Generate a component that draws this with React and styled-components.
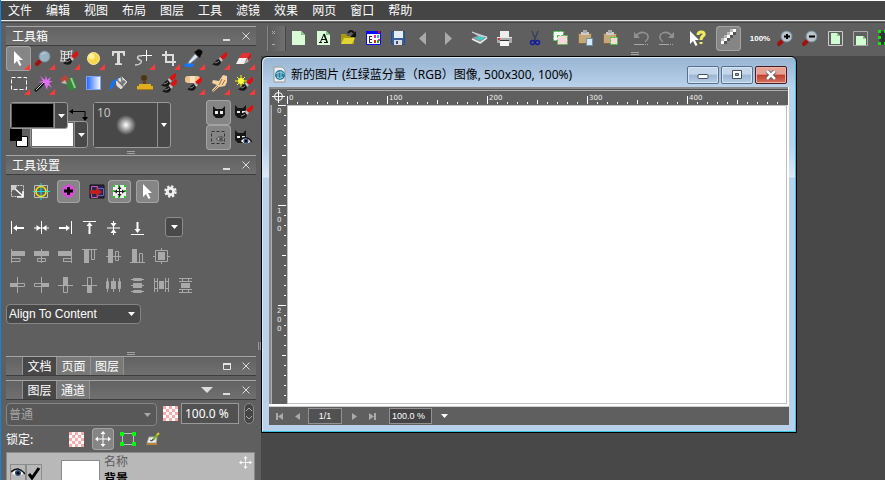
import React from "react";
import styled, { createGlobalStyle, css } from "styled-components";

const cjk = '"Noto Sans CJK SC", sans-serif';
const mixed = '"Noto Sans", "Noto Sans CJK SC", sans-serif';
const gray = "#5f5f5f";

const GlobalStyle = createGlobalStyle`
  * { box-sizing: border-box; }
  html, body, #root { margin: 0; height: 100%; }
  body { background: #484848; overflow: hidden; font: 12px/16px ${cjk}; color: #fff; }
  button, input, select { font: inherit; color: inherit; margin: 0; padding: 0; }
  button { border: 0; background: none; }
  svg { display: block; flex: none; }
`;

const Shell = styled.div`
  display: flex;
  flex-direction: column;
  height: 100vh;
  border-left: 1px solid #1583d8;
`;

const MenuBar = styled.nav`
  display: flex;
  gap: 14px;
  height: 21px;
  padding-left: 7px;
  background: #454545;
  border-top: 1px solid #fff;
  border-bottom: 1px solid #e6e6e6;
`;

const MenuItem = styled.button`
  height: 18px;
  line-height: 18px;
  white-space: nowrap;
`;

const Main = styled.div`
  display: flex;
  flex: 1;
  min-height: 0;
  border-top: 1px solid #6e6e6e;
`;

const Dock = styled.aside`
  display: flex;
  flex-direction: column;
  flex: 0 0 260px;
  padding: 3px 5px 0;
  background: ${gray};
  border-top: 1px solid #444;
  overflow: hidden;
`;

const DockEdge = styled.div`
  position: absolute;
  left: 258px;
  top: 342px;
  width: 3px;
  height: 8px;
  border: solid #999;
  border-width: 0 1px;
`;

const PanelHeader = styled.header`
  display: flex;
  align-items: center;
  flex: none;
  height: 20px;
  padding-right: 5px;
  border-top: 1px solid #a6a6a6;
  border-bottom: 1px solid #3d3d3d;
  background: linear-gradient(#626262, #707070);
`;

const PanelTitle = styled.h2`
  flex: 1;
  margin: 0;
  padding-left: 6px;
  font-size: 12px;
  font-weight: 400;
  line-height: 18px;
`;

const HeaderButton = styled.button`
  display: flex;
  width: 10px;
  height: 16px;
  margin-left: 9px;
  align-items: center;
  justify-content: center;
`;

const TabList = styled.div`
  display: flex;
  flex: 1;
  padding-left: 16px;
`;

const Tab = styled.button`
  width: 34px;
  height: 18px;
  line-height: 18px;
  border-left: 1px solid #919191;
  background: ${(p) => (p.$active ? "#484848" : "#797979")};
  &:last-child { border-right: 1px solid #919191; }
`;

const Grip = styled.div`
  flex: none;
  align-self: ${(p) => (p.$left ? "flex-start" : "center")};
  width: 8px;
  height: 3px;
  margin: 1px 0 1px ${(p) => p.$left || 0}px;
  border: solid #a2a2a2;
  border-width: 1px 0;
`;

const selected = css`
  background: #858585;
  box-shadow: inset 0 0 0 1px #a3a3a3;
  border-radius: 4px;
`;

const ToolGrid = styled.div`
  display: grid;
  grid-template-columns: repeat(10, 25px);
  grid-auto-rows: 25px;
  flex: none;
`;

const ToolButton = styled.button`
  display: flex;
  flex: none;
  width: 25px;
  height: 25px;
  ${(p) => p.$on && selected}
`;

const ColorRow = styled.div`
  display: flex;
  align-items: center;
  flex: none;
  gap: 5px;
  margin-top: 4px;
  padding-left: 4px;
`;

const ColorWells = styled.div`
  display: grid;
  width: 78px;
  height: 46px;
  > * { grid-area: 1 / 1; }
`;

const Well = styled.button`
  display: flex;
  width: 58px;
  height: 27px;
  place-self: ${(p) => (p.$back ? "end" : "start")};
  border: 1px solid #9a9a9a;
  border-radius: 3px;
  background: #484848;
  z-index: ${(p) => (p.$back ? 0 : 1)};
`;

const WellColor = styled.span`
  flex: 1;
  align-self: stretch;
  border: 1px solid #666;
  background: ${(p) => p.$color};
`;

const WellArrow = styled.span`
  display: flex;
  width: 13px;
  align-self: stretch;
  align-items: center;
  justify-content: center;
  border-left: 1px solid #909090;
`;

const SwapButton = styled.button`
  place-self: start end;
  margin-top: 6px;
`;

const ResetButton = styled.button`
  place-self: end start;
`;

const BrushPicker = styled.button`
  display: flex;
  width: 78px;
  height: 46px;
  border: 1px solid #9a9a9a;
  border-radius: 3px;
  background: #484848;
  text-align: left;
`;

const BrushPreview = styled.span`
  flex: 1;
  align-self: stretch;
  padding: 2px 3px;
  color: #c4c4c4;
  font: 12px/16px ${mixed};
  background: radial-gradient(circle at 32px 22px, #fff 0, #b5b5b5 4px, #484848 10px);
`;

const MaskGrid = styled.div`
  display: grid;
  grid-template-columns: 25px 25px;
  margin-left: auto;
`;

const SettingsRow = styled.div`
  display: flex;
  flex: none;
  gap: 5px;
  margin-top: 5px;
`;

const ButtonGroup = styled.div`
  display: flex;
`;

const SettingButton = styled.button`
  display: flex;
  width: 23px;
  height: 23px;
  ${(p) => p.$on && selected}
`;

const AlignRows = styled.div`
  display: flex;
  flex-direction: column;
  flex: none;
  gap: 9px;
  margin-top: 14px;
`;

const AlignRow = styled.div`
  display: flex;
  gap: 1px;
`;

const AlignButton = styled.button`
  display: flex;
  width: 23px;
  height: 20px;
  color: ${(p) => (p.disabled ? "#a9a9a9" : "#fff")};
`;

const DropButton = styled.button`
  display: flex;
  align-items: center;
  justify-content: center;
  width: 18px;
  height: 20px;
  margin-left: 15px;
  border: 1px solid #8c8c8c;
  border-radius: 3px;
  background: #494949;
`;

const SelectBox = styled.div`
  display: grid;
  align-items: center;
  flex: none;
  width: ${(p) => p.$width}px;
  > * { grid-area: 1 / 1; }
  > svg { justify-self: end; margin-right: 6px; pointer-events: none; }
`;

const Select = styled.select`
  appearance: none;
  width: 100%;
  height: ${(p) => p.$height}px;
  padding: 0 2px;
  border: 1px solid #858585;
  border-radius: 4px;
  background: ${(p) => (p.disabled ? "#585858" : "#484848")};
  color: ${(p) => (p.disabled ? "#a5a5a5" : "#fff")};
  opacity: 1;
  font-family: "Liberation Sans", ${cjk};
`;

const DockStack = styled.div`
  display: flex;
  flex-direction: column;
  flex: none;
  gap: 4px;
`;

const Spacer = styled.div`
  height: 27px;
  flex: none;
`;

const OpacityRow = styled.div`
  display: flex;
  align-items: flex-start;
  flex: none;
  margin-top: 3px;
  > svg { margin: 3px 3px 0 6px; }
`;

const NumberInput = styled.input`
  width: 58px;
  height: 21px;
  padding: 0 3px;
  border: 1px solid #999;
  background: #515151;
  font: 12px/16px ${mixed};
`;

const Spinner = styled.button`
  width: 10px;
  height: 21px;
  margin-left: 5px;
  border-radius: 5px;
  border: 1px solid #8a8a8a;
  background: #454545;
`;

const LockRow = styled.div`
  display: flex;
  align-items: center;
  flex: none;
  height: 22px;
  margin-top: 2px;
`;

const LockLabel = styled.span`
  width: 58px;
`;

const LockButton = styled.button`
  display: flex;
  align-items: center;
  justify-content: center;
  width: 24px;
  height: 22px;
`;

const LockSelected = styled(LockButton)`
  width: 22px;
  margin: 0 2px 0 4px;
  ${selected}
`;

const LayerList = styled.ul`
  display: flex;
  flex: none;
  align-items: flex-start;
  height: 56px;
  margin: 2px 1px 0 0;
  padding: 0 2px 0 3px;
  list-style: none;
  border: 1px solid #8a8a8a;
  background: #b8b8b8;
`;

const LayerRow = styled.li`
  display: flex;
  flex: 1;
`;

const LayerFlags = styled.div`
  display: flex;
  margin-top: 11px;
  width: 51px;
`;

const LayerFlag = styled.button`
  display: flex;
  align-items: center;
  justify-content: center;
  width: 16px;
  height: 17px;
  border: 1px solid #8b8b8b;
`;

const Thumb = styled.div`
  width: 39px;
  height: 44px;
  margin-top: 7px;
  background: #fff;
  border: 1px solid #8a8a8a;
`;

const LayerText = styled.div`
  flex: 1;
  padding-left: 4px;
  color: #5c5c5c;
`;

const LayerName = styled.strong`
  display: block;
  margin-top: 1px;
  color: #000;
`;

const LayerMove = styled.button`
  margin-top: 2px;
  height: 15px;
`;

const Work = styled.main`
  display: flex;
  flex-direction: column;
  flex: 1;
  min-width: 0;
`;

const ToolBar = styled.div`
  display: flex;
  flex-direction: column;
  height: 34px;
  flex: none;
  padding: 3px 0 0 6px;
  background: ${gray};
  border-top: 1px solid #444;
  overflow: hidden;
`;

const ToolBarRow = styled.div`
  display: flex;
  width: 100%;
  overflow: hidden;
`;

const ToolBarHandle = styled.div`
  flex: none;
  width: 19px;
  height: 25px;
  border-left: 1px solid #858585;
  border-right: 1px solid #454545;
  background: linear-gradient(90deg, #5c5c5c, #707070);
`;

const BarGroup = styled.div`
  display: flex;
  flex: none;
  & + & { margin-left: 6px; }
`;

const ZoomText = styled.button`
  width: 26px;
  height: 25px;
  font: bold 8px/24px "Liberation Sans", sans-serif;
`;

const Desktop = styled.div`
  position: relative;
  flex: 1;
  background: #484848;
`;

const DocWindow = styled.section`
  position: absolute;
  left: 0;
  top: 0;
  width: 536px;
  padding: 0 7px 7px;
  border: 1px solid #000;
  border-radius: 6px 6px 0 0;
  background: linear-gradient(#98b4d2 0, #b9d1ea 30px, #bad2ec 90px, #dce9f7 120px, #b9d1ea 121px);
  box-shadow: inset -1px -1px 0 #35c5e0, inset 1px 1px 0 #d9e9f7;
`;

const TitleBar = styled.header`
  display: flex;
  align-items: center;
  height: 30px;
  padding: 5px 2px 0 4px;
  color: #000;
`;

const DocTitle = styled.h1`
  flex: 1;
  margin: 0 0 0 5px;
  font: 12px/20px ${mixed};
  white-space: nowrap;
`;

const WinButton = styled.button`
  display: flex;
  align-items: center;
  justify-content: center;
  width: 32px;
  height: 18px;
  margin-left: 2px;
  border: 1px solid ${(p) => (p.$close ? "#4a1a22" : "#56708e")};
  border-radius: 2px;
  background: ${(p) =>
    p.$close
      ? "linear-gradient(#e5a295 0 45%, #c23f29 50%, #d3715f)"
      : "linear-gradient(#c3d6ea 0 45%, #9bb6d3 50%, #b6cee7)"};
  box-shadow: inset 0 0 0 1px ${(p) => (p.$close ? "#e9b3a8" : "#d6e4f3")};
`;

const DocFrame = styled.div`
  display: grid;
  grid-template-columns: 18px 1fr;
  grid-template-rows: 18px 299px;
  padding: 0 1px 2px 0;
  background: #fff;
  border-bottom: 1px solid #d0d0d0;
`;

const RulerCorner = styled.div`
  background: ${gray};
  border-top: 2px solid #8b8b8b;
  border-left: 1px solid #8b8b8b;
`;

const RulerTop = styled.div`
  background: ${gray};
  border-top: 2px solid #8b8b8b;
  box-shadow: inset 0 1px #505050, inset 0 2px #adadad;
  overflow: hidden;
`;

const RulerLeft = styled.div`
  background: ${gray};
  border-left: 2px solid #8b8b8b;
  box-shadow: inset 1px 0 #adadad;
  overflow: hidden;
`;

const Canvas = styled.div`
  background: #fff;
  border: 1px solid #c0c0c0;
  margin-right: 1px;
`;

const StatusBar = styled.footer`
  display: flex;
  align-items: center;
  height: 18px;
  padding-left: 2px;
  background: ${gray};
  font: 9px/14px "Liberation Sans", sans-serif;
`;

const StatusButton = styled.button`
  display: flex;
  align-items: center;
  justify-content: center;
  width: 18px;
  height: 16px;
`;

const StatusInput = styled.input`
  width: ${(p) => p.$width}px;
  height: 16px;
  margin: 0 3px 0 ${(p) => (p.$wide ? 8 : 1)}px;
  padding: 0 ${(p) => (p.$wide ? 2 : 0)}px;
  border: 1px solid #929292;
  background: ${(p) => (p.$wide ? "#444" : "#515151")};
  text-align: ${(p) => (p.$wide ? "left" : "center")};
`;

/* ---------- drawings ---------- */

const Svg = ({ w = 25, h = w, children, ...rest }) => (
  <svg width={w} height={h} viewBox={`0 0 ${w} ${h}`} fill="none" aria-hidden="true" {...rest}>
    {children}
  </svg>
);

const Down = ({ color = "#fff", w = 7 }) => (
  <Svg w={w} h={4}>
    <path d={`M0 0H${w}L${w / 2} 4Z`} fill={color} />
  </Svg>
);

const Corner = () => <path d="M24 18v6h-6Z" fill="#ff3838" />;

const Brush = ({ x = 0, y = 0 }) => (
  <g transform={`translate(${x} ${y})`}>
    <path d="M20 6l1 1v3l-4 4-3-3Z" fill="#e01010" />
    <path d="M14 11l3 3-2 2-3-2Z" fill="#bdbdbd" />
    <path d="M13 13l2 3c-1 5-6 4-9 2 3 0 3-4 7-5Z" fill="#151515" />
    <path d="M9 17q2 0 4-2" stroke="#888" />
  </g>
);

const Lens = ({ sign, light }) => (
  <>
    <path d="M9 15l-3 3" stroke="#a31010" strokeWidth="4" strokeLinecap="round" />
    <circle cx="13.500" cy="10.500" r="5.500" fill={light || "#9bb2c0"} stroke="#6f8c9e" />
    {!sign && <path d="M10 9q2-3 5-2" stroke="#c5d5dd" />}
    {sign}
  </>
);

const Pointer = () => <path d="M8 5v13l3-3 2.500 5 2-1-2.500-5h4Z" fill="#fff" />;

const TOOLS = [
  ["选择", <><Pointer /><Corner /></>],
  ["缩放", <><Lens /><Corner /></>],
  ["网格变形", <><path d="M5 5q5 2 11 0M5 8q5 1 10 0M5 12q5 1 9 0M4 15h7M5 4q1 5 0 11M8.500 5v10M12.500 5v8M16 4q-1 4 0 6" stroke="#ddd" /><Brush x={1} y={-1} /><Corner /></>],
  ["椭圆", <><circle cx="12.500" cy="12.500" r="6" fill="#f9d54c" stroke="#f7efaa" /><circle cx="10.500" cy="10.500" r="3" fill="#fff09a" /><Corner /></>],
  ["文字", <path d="M6 5h13v5h-1.500l-1-3H14v10l2 .5V19H9v-1.500l2-.5V7H8.500l-1 3H6Z" fill="#dcdcdc" />],
  ["路径", <><path d="M15.500 4v11M10 9.500h11" stroke="#fff" /><path d="M11 10c-6-1-5 3-2 4s1 5-5 5" stroke="#ccc" strokeWidth="1.500" /><Corner /></>],
  ["裁剪", <><path d="M10 5v11h10M6 9h11v11" stroke="#ddd" strokeWidth="2" /><Corner /></>],
  ["吸管", <><ellipse cx="8" cy="19" rx="5" ry="2" fill="#1574ff" /><path d="M14 8l3 3-7 6-3 1 1-3Z" fill="#dce7ef" stroke="#70889a" /><path d="M13 6l6 6 1-3q3-3 0-5t-5 1Z" fill="#080808" /><Corner /></>],
  ["画笔", <><Brush /><Corner /></>],
  ["橡皮", <><path d="M11 7h9l-3 5H8Z" fill="#e23333" /><path d="M8 12h8l-3 6H5Z" fill="#f2f2f2" /><path d="M17 12l3-4v4l-3 4-4 2Z" fill="#c9a9a9" /><path d="M17 11l3-4v5l-3 3Z" fill="#bb2020" /><Corner /></>],
  ["选框", <><path d="M5.500 6.500h15v12h-15z" stroke="#fff" strokeDasharray="4 2" /><Corner /></>],
  ["魔棒", <><path d="M15 4l1 5 4-3-2 4h4l-4 2 3 5-4-3-1 5-2-5-4 2 2-4-5-1 5-1-3-5 5 4Z" fill="#e46bf5" /><path d="M13 12l-9 8" stroke="#111" strokeWidth="3" /><path d="M13 11l-8 8" stroke="#ccc" /><Corner /></>],
  ["油漆", <><path d="M9 8l8-2 4 11-7 3-5-8Z" fill="#37843b" /><path d="M15 7l4 10" stroke="#8bd18a" strokeWidth="2" /><path d="M4 8l6-4 3 4-3 5-5-3Z" fill="#b6453e" /><path d="M5 12l4-3 2 4" fill="#bbb" /></>],
  ["渐变", <><defs><linearGradient id="blueRamp"><stop stopColor="#1d62ff" /><stop offset="1" stopColor="#fff" /></linearGradient></defs><path d="M5.500 5.500h14v13h-14z" fill="url(#blueRamp)" stroke="#7ba5ff" /></>],
  ["填充", <><path d="M9 9l7-4 6 6-7 8-5-4Z" fill="#ddd" stroke="#555" /><path d="M11 9l7 7M15 5l1 5" stroke="#777" strokeWidth="1.500" /><path d="M14 11l4-2 2 2-4 4Z" fill="#777" /><path d="M4 19q-1-11 9-11l-4 3q-1 6-5 8Z" fill="#1273ff" /></>],
  ["图章", <><circle cx="13" cy="7" r="3" fill="#4f3512" /><path d="M12 9h3v6h-3Z" fill="#68400d" /><path d="M8 13h12v2H8z" fill="#e1ae1e" /><path d="M6 15h16v3H6Z" fill="#e1ae1e" /><path d="M6 18h16v1H6z" fill="#a87b17" /></>],
  ["克隆画笔", <><g transform="translate(-1 -4)"><Brush /></g><Brush y={2} /></>],
  ["修复", <><rect x="4" y="5" width="15" height="7" rx="3" fill="#edc38d" /><path d="M9 5h5v7H9Z" fill="#fae0bb" /><Brush /><Corner /></>],
  ["涂抹", <><path d="M17 4l4 1v6l-2 4-6 1-6 5-1-2 5-5-5-2 1-3 6 1Z" fill="#f6d2a4" /><path d="M16 8l-3 6M19 9l-3 5M12 15l-5 5" stroke="#a96d32" /><Corner /></>],
  ["减淡", <><path d="M10 4v12M4 10h12M6 6l8 8M6 14l8-8" stroke="#ff0" /><circle cx="10" cy="10" r="3" fill="#ffff38" /><Brush x={1} /><Corner /></>],
];

const Cat = ({ extra }) => (
  <Svg><path d={extra ? "M4 5l3 3h5l3-3v9l-3 4H7l-3-3Z" : "M7 6l3 3h6l3-3v9l-3 3h-6l-3-3Z"} fill="#171717" /><path d={extra ? "M6 11h3v2H6zM11 11h3v2h-3z" : "M9 11h3v3H9zM14 11h3v3h-3z"} fill="#eee" />{extra}</Svg>
);

const Eye = () => <><path d="M1 7q6-7 12 0-6 6-12 0Z" fill="#fff" /><path d="M0 6q7-7 14 2" stroke="#111" strokeWidth="1.500" /><circle cx="7" cy="7" r="3" fill="#294c79" /><circle cx="7" cy="7" r="1.500" fill="#000" /></>;

const GearIcon = () => (
  <Svg w={23}><circle cx="11.500" cy="11.500" r="3.200" stroke="#eee" strokeWidth="3" /><circle cx="11.500" cy="11.500" r="5" stroke="#eee" strokeWidth="2.500" strokeDasharray="2.200 1.730" /></Svg>
);

const SETTING_GROUPS = [
  [
    ["变换", false, <><path d="M5.500 5.500h12v11h-12z" stroke="#d5d5d5" strokeDasharray="2 1" /><path d="M8 8l9 8m0-5v6h-6" stroke="#fff" strokeWidth="1.500" /><path d="M5 5h6l-1 4-5 2Z" fill="#ccc" /></>],
    ["中心", false, <><path d="M5.500 5.500h13v12h-13z" stroke="#bdbdbd" /><path d="M12 3v17M4 11.500h17" stroke="#00e4f5" /><circle cx="12" cy="11.500" r="5" stroke="#ffe100" strokeWidth="1.500" /></>],
  ],
  [["添加", true, <><circle cx="11.500" cy="11" r="6.500" fill="#df48df" /><path d="M11.500 7v8M7 11h9" stroke="#000" strokeWidth="3" /></>]],
  [
    ["移入", false, <><path d="M5 5h14v13H5z" fill="#292945" stroke="#111" /><path d="M6.500 6.500h6v11h-6z" stroke="#c55ac5" /><path d="M12.500 8.500h6v7h-6z" stroke="#6161d4" /><path d="M5 10h6V7l6 5-6 5v-3H5z" fill="#bd2020" /></>],
    ["移动", true, <><path d="M5 5h13v13H5z" fill="#efefef" /><path d="M5 5h2v2H5zM10 5h2v2h-2zM16 5h2v2h-2zM5 10h2v2H5zM16 10h2v2h-2zM5 16h2v2H5zM10 16h2v2h-2zM16 16h2v2h-2z" fill="#08df08" /><path d="M11.500 8v8M8 11.500h8" stroke="#222" /><path d="M11.500 6l2 3h-4zM11.500 17l2-3h-4zM6 11.500l3-2v4zM17 11.500l-3-2v4z" fill="#222" /></>],
  ],
  [["指针", true, <g transform="translate(-1 -1)"><Pointer /></g>], ["设置", false, null]],
];

const ALIGN = [
  [
    ["左对齐", <><path d="M5.500 4v13" stroke="currentColor" /><path d="M7 11l4-3v2h7v2h-7v2Z" fill="currentColor" /></>],
    ["水平居中", <><path d="M11.500 4v13M4 11h15" stroke="currentColor" /><path d="M10.500 11l-4-3v6ZM12.500 11l4-3v6Z" fill="currentColor" /></>],
    ["右对齐", <><path d="M17.500 4v13" stroke="currentColor" /><path d="M16 11l-4-3v2H5v2h7v2Z" fill="currentColor" /></>],
    ["顶对齐", <><path d="M5 4.500h13" stroke="currentColor" /><path d="M11.500 5l3 4h-2v8h-2V9h-2Z" fill="currentColor" /></>],
    ["垂直居中", <><path d="M5 11h13M11.500 4v14" stroke="currentColor" /><path d="M11.500 10l-3-4h6ZM11.500 12l-3 4h6Z" fill="currentColor" /></>],
    ["底对齐", <><path d="M5 17.500h13" stroke="currentColor" /><path d="M11.500 16l3-4h-2V5h-2v7h-2Z" fill="currentColor" /></>],
  ],
  [
    ["对象左", <><path d="M5.500 3v14M6 12.500h8v3H6" stroke="currentColor" /><path d="M5 5h14v5H5z" fill="currentColor" /></>],
    ["对象中", <><path d="M11.500 3v14M7.500 12.500h8v3h-8z" stroke="currentColor" /><path d="M4 5h15v5H4z" fill="currentColor" /></>],
    ["对象右", <><path d="M17.500 3v14M9.500 15.500h8M9.500 12.500h8M9.500 12v4" stroke="currentColor" /><path d="M4 5h14v5H4z" fill="currentColor" /></>],
    ["对象顶", <><path d="M4 3.500h15M13.500 4v9.500h3V4" stroke="currentColor" /><path d="M6 3h5v14H6z" fill="currentColor" /></>],
    ["对象腰", <><path d="M4 10.500h15M13.500 5.500h3v9h-3z" stroke="currentColor" /><path d="M6 3h5v14H6z" fill="currentColor" /></>],
    ["对象底", <><path d="M4 16.500h15M13.500 16V7.500h3V16" stroke="currentColor" /><path d="M6 3h5v14H6z" fill="currentColor" /></>],
    ["对象居中", <><path d="M5.500 4.500h12v11h-12zM11.500 2v3M11.500 15v3M3 10.500h3M17 10.500h3" stroke="currentColor" /><path d="M8 6h7v8H8z" fill="currentColor" /></>],
  ],
  [
    ["贴左", <><path d="M11.500 2v16M12 8.500h6.500v3H12" stroke="currentColor" /><path d="M4 8h8v4H4z" fill="currentColor" /></>],
    ["贴右", <><path d="M11.500 2v16M11 8.500H4.500v3H11" stroke="currentColor" /><path d="M11 8h8v4h-8z" fill="currentColor" /></>],
    ["贴上", <><path d="M4 10.500h15M9.500 11v6.500h4V11" stroke="currentColor" /><path d="M9 2h5v9H9z" fill="currentColor" /></>],
    ["贴下", <><path d="M4 10.500h15M9.500 10V2.500h4V10" stroke="currentColor" /><path d="M9 10h5v8H9z" fill="currentColor" /></>],
    ["水平分布", <><path d="M5.500 3v14M11.500 3v14M17.500 3v14" stroke="currentColor" /><path d="M4.500 6.500h2v7h-2zM16.500 6.500h2v7h-2z" stroke="currentColor" /><path d="M9 6h5v8H9z" fill="currentColor" /></>],
    ["垂直分布", <><path d="M5 4.500h13M5 10.500h13M5 16.500h13M7.500 3.500h8v2h-8zM7.500 15.500h8v2h-8z" stroke="currentColor" /><path d="M7 8h9v5H7z" fill="currentColor" /></>],
    ["水平间距", <><path d="M4.500 3v14M7.500 3v14M15.500 3v14M18.500 3v14M4 6.500h4M4 13.500h4M15 6.500h4M15 13.500h4" stroke="currentColor" /><path d="M9 6h5v8H9z" fill="currentColor" /></>],
    ["垂直间距", <><path d="M5 3.500h13M5 6.500h13M5 14.500h13M5 17.500h13M8.500 4v3M14.500 4v3M8.500 14v3M14.500 14v3" stroke="currentColor" /><path d="M7 8h9v5H7z" fill="currentColor" /></>],
  ],
];

const Checker = () => (
  <Svg w={15}>
    <path d="M0 0h15v15H0z" fill="#fff" />
    {[0, 1, 2, 3, 4].flatMap((r) => [0, 1, 2, 3, 4].filter((c) => (r + c) % 2 === 0).map((c) => <path key={`${r}-${c}`} d={`M${c * 3} ${r * 3}h3v3h-3z`} fill="#ffaaaa" />))}
  </Svg>
);

const MoveCross = ({ w = 16 }) => (
  <svg width={w} height={w} viewBox="0 0 16 16" fill="none" aria-hidden="true">
    <path d="M8 2v12M2 8h12" stroke="#fff" /><path d="M8 0l2.500 3h-5ZM8 16l2.500-3h-5ZM0 8l3-2.500v5ZM16 8l-3-2.500v5Z" fill="#fff" />
  </svg>
);

const Page = () => <><path d="M6 5h9l4 4v10H6z" fill="#d9fbd6" /><path d="M15 5v4h4Z" fill="#82c986" /></>;
const Paste = () => <><path d="M5.500 7.500h13v10h-13z" fill="#c4a878" stroke="#7d6949" /><path d="M8 6h8v3H8z" fill="#ccc" /><path d="M10 4h4v3h-4z" fill="#aaa" /></>;

const BAR = [
  [
    ["新建", <Page />],
    ["新建文字", <><Page /><path d="M8 16.500h3M13 16.500h4M9.500 16l3.500-8 3 8" stroke="#111" /><path d="M13 8l3 8" stroke="#111" strokeWidth="1.500" /><path d="M10 13.500h5" stroke="#111" /></>],
    ["打开", <><path d="M5 8h5l1 2h7v8H5z" fill="#a99a0a" /><path d="M8 12h11l-3 6H5z" fill="#e0d534" /><path d="M12 7q3-4 6 0" stroke="#111" strokeWidth="2" /><path d="M20 5v6h-6z" fill="#111" /></>],
    ["浏览", <><path d="M5.500 5.500h14v13h-14z" fill="#fff" stroke="#0808ff" /><path d="M5 5h15v3H5z" fill="#0808ff" /><path d="M17 5h2v2h-2z" fill="#f00" /><path d="M8.500 10v7M8 10.500h3M8 13.500h3M8 16.500h3" stroke="#333" /><path d="M13 9h2v3h-2zM17 13h2v2h-2z" fill="#f020b0" /><path d="M16 9h2v3h-2z" fill="#20bdf0" /><path d="M13 14h2v3h-2z" fill="#d22" /><path d="M16 14h2v3h-2z" fill="#11b511" /></>],
    ["保存", <><path d="M5.500 5.500h13v13H7l-1.500-1z" fill="#3a5fa0" stroke="#284d83" /><path d="M8 5h9v7H8z" fill="#e6ecf4" /><path d="M8 14h8v5H8z" fill="#ddd" /><path d="M10 15h2v3h-2z" fill="#34547e" /></>],
    ["后退", <path d="M15 6v13l-7-6.500Z" fill="#aaa" />],
    ["前进", <path d="M9 6v13l7-6.500Z" fill="#aaa" />],
  ],
  [
    ["扫描", <><path d="M5 12l8-3 8 2-7 7Z" fill="#8e9c9e" /><path d="M5 6l15 5-8-1Z" fill="#b9c4c6" stroke="#dde" strokeWidth=".7" /><path d="M5 13l8 4 7-5" stroke="#eee" strokeWidth="1.500" /><path d="M9 12l4-1.500 4 1.500-4 2Z" fill="#20dddd" /></>],
    ["打印", <><path d="M8 5h9v7H8z" fill="#eee" /><path d="M5 11h15v6H5z" fill="#aaa" /><path d="M5 11.500h15" stroke="#e8e8e8" /><path d="M8 14h9v6H8z" fill="#f4f4f4" /><path d="M8 14.500h9" stroke="#333" /><path d="M6 12h2v2H6z" fill="#d33" /></>],
  ],
  [
    ["剪切", <><path d="M9 5l4 10M15 5l-4 10" stroke="#3b4254" strokeWidth="1.500" /><circle cx="9.500" cy="16.500" r="2" stroke="#141c9f" strokeWidth="1.500" /><circle cx="14.500" cy="16.500" r="2" stroke="#141c9f" strokeWidth="1.500" /></>],
    ["复制", <><path d="M5.500 5.500h10v9h-10z" fill="#fff" stroke="#22d522" strokeDasharray="2 2" /><path d="M9.500 9.500h10v9h-10z" fill="#ffd7dc" stroke="#22d522" strokeDasharray="2 2" /></>],
    ["粘贴", <><Paste /><path d="M13.500 12.500h6v7h-6z" fill="#d2e9ff" stroke="#738fb0" /></>],
    ["粘贴选区", <><Paste /><path d="M12.500 11.500h7v7h-7z" fill="#ffd7dc" stroke="#22d522" strokeDasharray="2 1" /></>],
  ],
  [
    ["撤销", <><path d="M7 10q5-6 11-2 3 4-2 8" stroke="#919191" strokeWidth="1.500" /><path d="M5 6v6h6z" fill="#919191" /><path d="M5 18.500h9" stroke="#aaa" /><path d="M14 18.500h6" stroke="#aaa" strokeDasharray="1 1" /></>],
    ["重做", <><path d="M18 10q-5-6-11-2-3 4 2 8" stroke="#919191" strokeWidth="1.500" /><path d="M20 6v6h-6z" fill="#919191" /><path d="M5 18.500h9" stroke="#aaa" /><path d="M14 18.500h6" stroke="#aaa" strokeDasharray="1 1" /></>],
  ],
  [["帮助", <><g transform="translate(-3 0)"><Pointer /></g><path d="M13 9q0-3 3-3 4 0 3 3-3 2-3 5M16 16v2" stroke="#f3ea5d" strokeWidth="3" /></>]],
  [["平滑", <><path d="M8 12h3v3H8zM11 9h3v3h-3zM14 6h3v3h-3zM8 15h3v3H8zM11 12h3v3h-3zM14 9h3v3h-3zM17 6h3v3h-3z" fill="#555" /><path d="M5 15h3v3H5zM8 12h3v3H8zM11 9h3v3h-3zM14 6h3v3h-3zM17 3h3v3h-3z" fill="#fff" /><path d="M5 12h3v3H5zM8 9h3v3H8zM11 6h3v3h-3zM14 3h3v3h-3z" fill="#bbb" /></>, true]],
  [
    ["100%", null],
    ["放大", <Lens light="#b9c5ca" sign={<path d="M11 10.500h6M14 8v5" stroke="#000" strokeWidth="2" />} />],
    ["缩小", <Lens light="#b9c5ca" sign={<path d="M11 10.500h6" stroke="#000" strokeWidth="2" />} />],
    ["适合页面", <><path d="M5.500 5.500h14v14h-14z" stroke="#ccc" /><path d="M8 7h6l3 3v8H8z" fill="#cfffd0" /><path d="M14 7v3h3Z" fill="#8cc68d" /></>],
    ["适合宽度", <><path d="M5.500 5.500h14v14h-14z" stroke="#aaa" /><path d="M8 10h7l3 3v6H8z" fill="#cfffd0" /><path d="M15 10v3h3Z" fill="#8cc68d" /></>],
    ["适合选区", <><path d="M6.500 5.500h14v13h-14z" fill="#333" /><path d="M5 4h3v3H5zM5 10h3v3H5zM5 16h3v3H5zM11 4h3v3h-3zM11 16h3v3h-3z" fill="#0de90d" /></>],
  ],
];

const digits = { fill: "#eee", fontFamily: "DejaVu Sans", fontSize: 7 };

const TopScale = () => (
  <Svg w={500} h={16}>
    {Array.from({ length: 50 }, (_, i) => (
      <path key={i} d={`M${i * 10 + 0.5} ${i % 10 === 0 ? 7 : i % 5 === 0 ? 11 : 13}V15`} stroke="#fff" />
    ))}
    {[0, 100, 200, 300, 400].map((n) => <text key={n} x={n + 2} y="11" {...digits}>{n}</text>)}
  </Svg>
);

const LeftScale = () => (
  <Svg w={16} h={299}>
    {Array.from({ length: 30 }, (_, i) => (
      <path key={i} d={`M${i % 10 === 0 ? 7 : i % 5 === 0 ? 11 : 13} ${i * 10 + 0.5}H15`} stroke="#fff" />
    ))}
    {[0, 100, 200].flatMap((n) => String(n).split("").map((c, k) => <text key={`${n}-${k}`} x="6" y={n + 8 + k * 9} {...digits}>{c}</text>))}
  </Svg>
);

const MinIcon = () => <Svg w={8} h={16}><path d="M0 11h7v2H0z" fill="#ddd" /></Svg>;
const MaxIcon = () => <Svg w={8} h={16}><path d="M.5 5.500h7v6h-7z" stroke="#e5e5e5" /><path d="M0 5h8v2H0z" fill="#e5e5e5" /></Svg>;
const CloseIcon = () => <Svg w={8} h={16}><path d="M.5 4.500l7 7m0-7l-7 7" stroke="#ddd" /></Svg>;

const WindowControls = ({ maximize, menu }) => (
  <>
    {menu && <HeaderButton aria-label="菜单"><Svg w={12} h={6}><path d="M0 0h12L6 6z" fill="#ddd" /></Svg></HeaderButton>}
    {menu && <HeaderGap />}
    <HeaderButton aria-label={maximize ? "还原" : "最小化"}>{maximize ? <MaxIcon /> : <MinIcon />}</HeaderButton>
    <HeaderButton aria-label="关闭"><CloseIcon /></HeaderButton>
  </>
);

const HeaderGap = styled.span`
  width: 1px;
`;

const MENUS = ["文件", "编辑", "视图", "布局", "图层", "工具", "滤镜", "效果", "网页", "窗口", "帮助"];

export default function App() {
  return (
    <Shell>
      <GlobalStyle />
      <MenuBar>{MENUS.map((m) => <MenuItem key={m}>{m}</MenuItem>)}</MenuBar>
      <Main>
        <Dock>
          <PanelHeader><PanelTitle>工具箱</PanelTitle><WindowControls /></PanelHeader>
          <ToolGrid>
            {TOOLS.map(([name, art], i) => <ToolButton key={name} aria-label={name} $on={i === 0}><Svg>{art}</Svg></ToolButton>)}
          </ToolGrid>
          <ColorRow>
            <ColorWells>
              <Well aria-label="前景色"><WellColor $color="#000" /><WellArrow><Down /></WellArrow></Well>
              <Well $back aria-label="背景色"><WellColor $color="#fff" /><WellArrow><Down /></WellArrow></Well>
              <SwapButton aria-label="交换颜色"><Svg w={19} h={14}><path d="M2 3.500h14v8" stroke="#000" /><path d="M0 3.500L4 1v5ZM16 13l-3-4h6Z" fill="#000" /></Svg></SwapButton>
              <ResetButton aria-label="默认颜色"><Svg w={19}><path d="M6.500 7.500h11v10h-11z" fill="#fff" stroke="#000" /><path d="M0 0h12v12H0z" fill="#000" /></Svg></ResetButton>
            </ColorWells>
            <BrushPicker aria-label="画笔大小"><BrushPreview>10</BrushPreview><WellArrow><Down w={6} /></WellArrow></BrushPicker>
            <MaskGrid>
              <ToolButton $on aria-label="蒙版"><Cat /></ToolButton>
              <ToolButton aria-label="绘制蒙版"><Cat extra={<Brush x={1} y={-1} />} /></ToolButton>
              <ToolButton $on aria-label="显示选区"><Svg><path d="M5.500 6.500h13v12h-13z" stroke="#333" strokeDasharray="3 2" /><path d="M10 14q5-5 9 0-4 4-9 0Z" fill="#aaa" stroke="#555" /><circle cx="15" cy="14" r="2" fill="#555" /></Svg></ToolButton>
              <ToolButton aria-label="显示蒙版"><Cat extra={<g transform="translate(9 10) scale(.85)"><Eye /></g>} /></ToolButton>
            </MaskGrid>
          </ColorRow>
          <Grip />
          <PanelHeader><PanelTitle>工具设置</PanelTitle><WindowControls /></PanelHeader>
          <SettingsRow>
            {SETTING_GROUPS.map((g, i) => (
              <ButtonGroup key={i}>
                {g.map(([name, on, art]) => <SettingButton key={name} $on={on} aria-label={name}>{art ? <Svg w={23}>{art}</Svg> : <GearIcon />}</SettingButton>)}
              </ButtonGroup>
            ))}
          </SettingsRow>
          <AlignRows>
            {ALIGN.map((row, i) => (
              <AlignRow key={i}>
                {row.map(([name, art]) => <AlignButton key={name} aria-label={name} disabled={i > 0}><Svg w={23} h={20}>{art}</Svg></AlignButton>)}
                {i === 0 && <DropButton aria-label="对齐选项"><Down /></DropButton>}
              </AlignRow>
            ))}
            <SelectBox $width={135}>
              <Select $height={20} aria-label="对齐目标"><option>Align To Content</option></Select><Down />
            </SelectBox>
          </AlignRows>
          <Spacer />
          <Grip />
          <DockStack>
            <PanelHeader>
              <TabList role="tablist"><Tab role="tab" $active>文档</Tab><Tab role="tab">页面</Tab><Tab role="tab">图层</Tab></TabList>
              <WindowControls maximize />
            </PanelHeader>
            <PanelHeader>
              <TabList role="tablist"><Tab role="tab" $active>图层</Tab><Tab role="tab">通道</Tab></TabList>
              <WindowControls menu />
            </PanelHeader>
          </DockStack>
          <OpacityRow>
            <SelectBox $width={151}>
              <Select $height={23} disabled aria-label="混合模式"><option>普通</option></Select><Down color="#a8a8a8" />
            </SelectBox>
            <Checker />
            <NumberInput aria-label="不透明度" defaultValue="100.0 %" />
            <Spinner aria-label="调整不透明度"><Svg w={8} h={19}><path d="M1 7l3-3 3 3M1 12l3 3 3-3" stroke="#aaa" /></Svg></Spinner>
          </OpacityRow>
          <LockRow>
            <LockLabel>锁定:</LockLabel>
            <LockButton aria-label="锁定透明"><Checker /></LockButton>
            <LockSelected aria-label="锁定位置"><MoveCross /></LockSelected>
            <LockButton aria-label="锁定变换"><Svg w={16}><path d="M2.500 2.500h11v11h-11z" stroke="#bbb" /><path d="M0 1h4v4H0zM12 1h4v4h-4zM0 11h4v4H0zM12 11h4v4h-4z" fill="#0f0" /></Svg></LockButton>
            <LockButton aria-label="锁定绘制"><Svg w={16}><path d="M5 6h8l-1 6H3z" fill="#eee" stroke="#aaa" /><path d="M3 12h10v2H2z" fill="#b8823a" /><path d="M14 3L9 9" stroke="#7cb520" strokeWidth="2" /><path d="M13 4l2-2" stroke="#e9c424" strokeWidth="2" /><path d="M6 9l2 1 1-2" stroke="#333" /></Svg></LockButton>
          </LockRow>
          <LayerList>
            <LayerRow>
              <LayerFlags>
                <LayerFlag aria-label="可见"><Svg w={14}><Eye /></Svg></LayerFlag>
                <LayerFlag aria-label="启用"><Svg w={14}><path d="M2 8l3 4 7-10" stroke="#000" strokeWidth="3" /></Svg></LayerFlag>
              </LayerFlags>
              <Thumb />
              <LayerText>名称<LayerName>背景</LayerName></LayerText>
              <LayerMove aria-label="移动图层"><MoveCross w={13} /></LayerMove>
            </LayerRow>
          </LayerList>
        </Dock>
        <DockEdge />
        <Work>
          <ToolBar>
            <ToolBarRow>
              <ToolBarHandle><Svg w={16} h={25}><path d="M4 5l3 3m0-3L4 8M4 18.500h3" stroke="#aaa" /></Svg></ToolBarHandle>
              {BAR.map((group, i) => (
                <BarGroup key={i}>
                  {group.map(([name, art, on]) =>
                    art ? <ToolButton key={name} $on={on} aria-label={name}><Svg>{art}</Svg></ToolButton> : <ZoomText key={name}>{name}</ZoomText>
                  )}
                </BarGroup>
              ))}
            </ToolBarRow>
            <Grip $left={364} />
          </ToolBar>
          <Desktop>
            <DocWindow>
              <TitleBar>
                <Svg w={13} h={17}><path d="M1 1h8l3 3v12H1z" fill="#eee" stroke="#999" /><circle cx="7" cy="9" r="5" fill="#277b9c" /><path d="M3 8q4-4 8 0M4 11q3 3 6 0M5 6v6M8 5v7" stroke="#9ad1e0" /></Svg>
                <DocTitle>新的图片 (红绿蓝分量（RGB）图像, 500x300, 100%)</DocTitle>
                <WinButton aria-label="最小化"><Svg w={13} h={10}><rect x="1" y="4.500" width="10" height="4" rx="1" fill="#fff" stroke="#435064" /></Svg></WinButton>
                <WinButton aria-label="最大化"><Svg w={13} h={10}><path d="M1.500.5h9v8h-9z" stroke="#435064" fill="#fff" /><path d="M4.500 3.500h3v2h-3z" stroke="#435064" fill="#9bb6d3" /></Svg></WinButton>
                <WinButton $close aria-label="关闭"><Svg w={13} h={10}><path d="M2 1l8 8m0-8L2 9" stroke="#46535f" strokeWidth="4" /><path d="M2 1l8 8m0-8L2 9" stroke="#fff" strokeWidth="2.500" /></Svg></WinButton>
              </TitleBar>
              <DocFrame>
                <RulerCorner><Svg w={17} h={16}><circle cx="8.500" cy="7.500" r="4" stroke="#fff" /><path d="M8.500 1v13M2 7.500h13" stroke="#fff" /></Svg></RulerCorner>
                <RulerTop><TopScale /></RulerTop>
                <RulerLeft><LeftScale /></RulerLeft>
                <Canvas />
              </DocFrame>
              <StatusBar>
                <StatusButton aria-label="第一页"><Svg w={8}><path d="M1 1v7" stroke="#aaa" strokeWidth="2" /><path d="M7 1v7L2 4.500z" fill="#aaa" /></Svg></StatusButton>
                <StatusButton aria-label="上一页"><Svg w={8}><path d="M6 1v7L1 4.500z" fill="#aaa" /></Svg></StatusButton>
                <StatusInput $width={34} aria-label="页码" defaultValue="1/1" />
                <StatusButton aria-label="下一页"><Svg w={8}><path d="M2 1v7l5-3.500z" fill="#aaa" /></Svg></StatusButton>
                <StatusButton aria-label="最后一页"><Svg w={8}><path d="M7 1v7" stroke="#aaa" strokeWidth="2" /><path d="M1 1v7l5-3.500z" fill="#aaa" /></Svg></StatusButton>
                <StatusInput $width={43} $wide aria-label="缩放" defaultValue="100.0 %" />
                <StatusButton aria-label="缩放列表"><Down /></StatusButton>
              </StatusBar>
            </DocWindow>
          </Desktop>
        </Work>
      </Main>
    </Shell>
  );
}
